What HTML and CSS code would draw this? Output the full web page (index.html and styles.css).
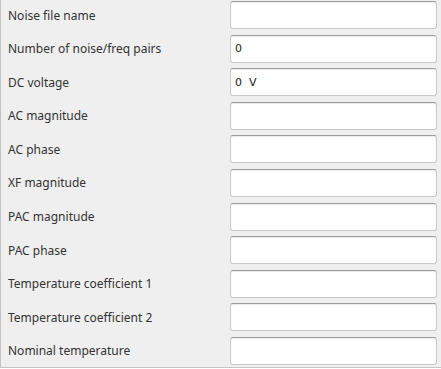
FILE: index.html
```html
<!DOCTYPE html>
<html>
<head>
	<title>Noise source</title>
	<link rel="stylesheet" href="styles.css">
</head>
<body>
	<div class="panel">
		<!-- 参数列表 -->
		<div class="row">
			<label>Noise file name</label>
			<input class="field" type="text" value="">
		</div>
		<div class="row">
			<label>Number of noise/freq pairs</label>
			<input class="field" type="text" value="0">
		</div>
		<div class="row">
			<label>DC voltage</label>
			<input class="field" type="text" value="0  V">
		</div>
		<div class="row">
			<label>AC magnitude</label>
			<input class="field" type="text" value="">
		</div>
		<div class="row">
			<label>AC phase</label>
			<input class="field" type="text" value="">
		</div>
		<div class="row">
			<label>XF magnitude</label>
			<input class="field" type="text" value="">
		</div>
		<div class="row">
			<label>PAC magnitude</label>
			<input class="field" type="text" value="">
		</div>
		<div class="row">
			<label>PAC phase</label>
			<input class="field" type="text" value="">
		</div>
		<div class="row">
			<label>Temperature coefficient 1</label>
			<input class="field" type="text" value="">
		</div>
		<div class="row">
			<label>Temperature coefficient 2</label>
			<input class="field" type="text" value="">
		</div>
		<div class="row">
			<label>Nominal temperature</label>
			<input class="field" type="text" value="">
		</div>
	</div>
</body>
</html>
```
FILE: styles.css
```css
*{
	margin: 0;
	padding: 0;
	box-sizing: border-box;
}
body{
	background: #fff;
	font-family: "Noto Sans", "Open Sans", sans-serif;
}
.panel{
	width: 441px;
	height: 368px;
	padding: 1px 4px 0 7px;
	background: #efefef;
	border-left: 1px solid #c4c4c4;
	border-bottom: 1px solid #c4c4c4;
	display: flex;
	flex-direction: column;
	gap: 5.6px;
}
.row{
	display: flex;
	align-items: center;
	justify-content: space-between;
	height: 28px;
}
.row label{
	font-size: 12px;
	color: #333;
}
.field{
	width: 207px;
	height: 28px;
	padding: 0 4px;
	border: 1px solid #c8c8c8;
	border-top-color: #9c9c9c;
	border-radius: 3px;
	background: #fff;
	box-shadow: inset 0 1px 1px rgba(0,0,0,.08);
	font-family: "DejaVu Sans", sans-serif;
	font-size: 11px;
	color: #222;
	white-space: pre;
}
```
